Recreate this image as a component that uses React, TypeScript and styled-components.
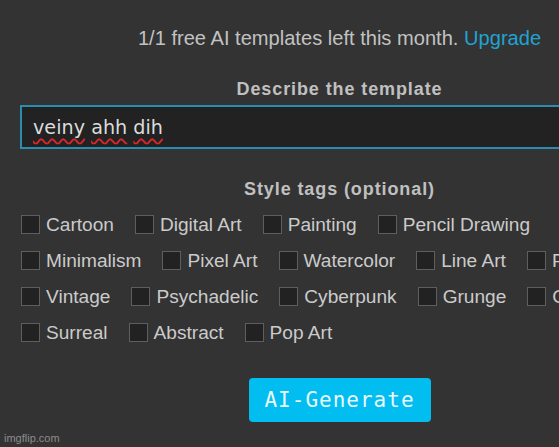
import React from "react";
import styled, { createGlobalStyle } from "styled-components";

const GlobalStyle = createGlobalStyle`
  html, body {
    margin: 0;
    padding: 0;
    background: #333333;
    overflow: hidden;
    width: 559px;
    height: 447px;
  }
  * { box-sizing: border-box; }
`;

const Page = styled.div`
  position: relative;
  width: 559px;
  height: 447px;
  overflow: hidden;
  background: #333333;
  font-family: "Liberation Sans", Arial, sans-serif;
`;

const Panel = styled.div`
  margin-left: 20px;
  width: 639px;
  padding-top: 26px;
  display: flex;
  flex-direction: column;
  align-items: center;
`;

const Quota = styled.div`
  font-size: 20.1px;
  line-height: 24px;
  color: #c2c2c2;
  white-space: nowrap;
`;

const UpgradeLink = styled.a`
  color: #1fa3d2;
  text-decoration: none;
  cursor: pointer;
`;

const SectionLabel = styled.div<{ $top: number }>`
  margin-top: ${(p) => p.$top}px;
  font-size: 18px;
  font-weight: bold;
  letter-spacing: 0.9px;
  line-height: 22px;
  color: #c0c0c0;
  white-space: nowrap;
`;

const PromptBox = styled.div`
  margin-top: 5px;
  width: 100%;
  height: 44px;
  border: 2px solid #2b8cb0;
  background: #222222;
  padding: 0 11px;
  display: flex;
  align-items: center;
  font-family: "DejaVu Sans", sans-serif;
  font-size: 19.2px;
  color: #dcdcdc;
`;

const PromptText = styled.span`
  white-space: pre;
`;

const Misspelled = styled.span`
  text-decoration: underline wavy #d9262b;
  text-decoration-thickness: 1.5px;
  text-underline-offset: 4px;
`;

const TagGrid = styled.div`
  margin-top: 14px;
  width: 100%;
  padding-left: 1px;
  display: flex;
  flex-wrap: wrap;
  row-gap: 16px;
  column-gap: 21px;
`;

const Tag = styled.label`
  display: flex;
  align-items: center;
  gap: 6px;
  height: 20px;
  cursor: pointer;
`;

const Box = styled.span`
  width: 19px;
  height: 19px;
  border: 1.5px solid #5e5e5e;
  background: #222222;
  flex: none;
`;

const TagText = styled.span`
  font-size: 19.1px;
  line-height: 20px;
  padding-top: 2px;
  color: #cbcbcb;
  white-space: nowrap;
`;

const GenerateButton = styled.button`
  margin-top: 36px;
  width: 182px;
  height: 44px;
  border: none;
  border-radius: 4px;
  background: #01bdf0;
  color: #e9f8fd;
  font-family: "DejaVu Sans Mono", monospace;
  font-size: 21px;
  letter-spacing: 1px;
  padding: 0;
  cursor: pointer;
`;

const Watermark = styled.div`
  position: absolute;
  left: 4px;
  bottom: 3px;
  font-family: "Liberation Sans", Arial, sans-serif;
  font-size: 11px;
  color: #8c8c8c;
`;

const tags = [
  "Cartoon",
  "Digital Art",
  "Painting",
  "Pencil Drawing",
  "Minimalism",
  "Pixel Art",
  "Watercolor",
  "Line Art",
  "Fantasy",
  "Vintage",
  "Psychadelic",
  "Cyberpunk",
  "Grunge",
  "Gothic",
  "Surreal",
  "Abstract",
  "Pop Art",
];

export default function App() {
  return (
    <Page>
      <GlobalStyle />
      <Panel>
        <Quota>
          1/1 free AI templates left this month. <UpgradeLink>Upgrade</UpgradeLink>
        </Quota>
        <SectionLabel $top={28}>Describe the template</SectionLabel>
        <PromptBox>
          <PromptText>
            <Misspelled>veiny</Misspelled>{" "}
            <Misspelled>ahh</Misspelled>{" "}
            <Misspelled>dih</Misspelled>
          </PromptText>
        </PromptBox>
        <SectionLabel $top={29}>Style tags (optional)</SectionLabel>
        <TagGrid>
          {tags.map((t) => (
            <Tag key={t}>
              <Box />
              <TagText>{t}</TagText>
            </Tag>
          ))}
        </TagGrid>
        <GenerateButton>AI-Generate</GenerateButton>
      </Panel>
      <Watermark>imgflip.com</Watermark>
    </Page>
  );
}
